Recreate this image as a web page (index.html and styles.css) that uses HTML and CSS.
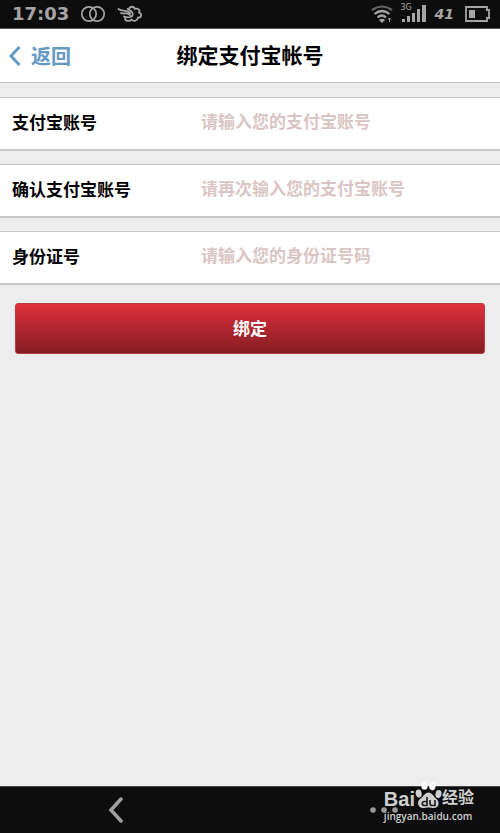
FILE: index.html
```html
<!DOCTYPE html>
<html lang="zh-CN">
<head>
<meta charset="utf-8">
<meta name="viewport" content="width=device-width, initial-scale=1">
<title>绑定支付宝帐号</title>
<link rel="stylesheet" href="styles.css">
</head>
<body>
<div class="status">
  <div class="status-group status-left">
    <span class="clock">17:03</span>
    <svg width="26" height="18" viewBox="0 0 26 18" fill="none" stroke="#a5a5a5" stroke-width="1.7"><circle cx="9" cy="9" r="7.2"/><circle cx="17" cy="9" r="7.2"/></svg>
    <svg width="26" height="18" viewBox="0 0 26 18" fill="none" stroke="#a5a5a5" stroke-width="1.8" stroke-linecap="round" stroke-linejoin="round"><path d="M12 4C13 1 17 1 18 4C21 3 23.500 5 22 7.500C25.500 9 24.500 13 21 12.500C20.500 16 16.500 17 14.500 14.500C12 17 8 16 8 13"/><path d="M1.500 4C5 7 9 4 13 8M4 8C7 9.500 10 7 13 10M7 11.500C11 13 17 12.500 15.500 8C14.500 5.500 12.500 5 10.500 4"/></svg>
  </div>
  <div class="status-group status-right">
    <svg width="22" height="20" viewBox="0 0 22 20" fill="none" stroke="#a5a5a5" stroke-width="2.200"><path d="M1 6Q11-1 21 6" stroke="#666"/><path d="M3.500 10Q11 4 18.500 10M6.500 13.500Q11 9.500 15 13.500"/><path d="M8 16Q11 13.500 14 16L11 19Z" fill="#a5a5a5" stroke="none"/><path d="M18.500 18V14M17 15.500L18.500 14L20 15.500" stroke-width="1"/></svg>
    <div class="signal">
      <span class="network">3G</span>
      <svg width="26" height="18" viewBox="0 0 26 18" fill="#a5a5a5"><path d="M1 14h3v3H1zM6 11h3v6H6zM11 8h3v9h-3zM16 4h3v13h-3zM21 0h4v17h-4z"/></svg>
    </div>
    <span class="percent">41</span>
    <svg width="26" height="16" viewBox="0 0 26 16"><path d="M1 1H22V4H24V12H22V15H1Z" fill="none" stroke="#a5a5a5" stroke-width="1.800"/><path d="M4 4h6v8H4z" fill="#a5a5a5"/></svg>
  </div>
</div>
<header class="header">
  <a class="back" href="#"><svg width="12" height="20" viewBox="0 0 12 20" fill="none" stroke="#6699c4" stroke-width="3"><path d="M10.500 1L2 10L10.500 19"/></svg>返回</a>
  <h1 class="title">绑定支付宝帐号</h1>
</header>
<main class="content">
  <form class="form">
    <div class="row"><label class="label" for="account">支付宝账号</label><input class="field" id="account" type="text" placeholder="请输入您的支付宝账号"></div>
    <div class="row"><label class="label" for="confirm">确认支付宝账号</label><input class="field" id="confirm" type="text" placeholder="请再次输入您的支付宝账号"></div>
    <div class="row"><label class="label" for="identity">身份证号</label><input class="field" id="identity" type="text" placeholder="请输入您的身份证号码"></div>
    <button class="submit" type="button">绑定</button>
  </form>
</main>
<footer class="nav">
  <button class="nav-button" type="button" aria-label="后退"><svg width="16" height="26" viewBox="0 0 16 26" fill="none" stroke="#a0a0a0" stroke-width="3.500" stroke-linecap="round"><path d="M13 2L3 13L13 24"/></svg></button>
  <button class="nav-button" type="button" aria-label="更多"><svg width="28" height="6" viewBox="0 0 28 6" fill="#999"><circle cx="3" cy="3" r="2.800"/><circle cx="14" cy="3" r="2.800"/><circle cx="25" cy="3" r="2.800"/></svg></button>
  <div class="watermark">
    <div class="brand">
      <span class="brand-name">Bai</span>
      <svg width="27" height="28" viewBox="0 0 27 28" fill="#d0d0d0"><ellipse cx="3.700" cy="12.500" rx="3" ry="4" transform="rotate(-12 3.700 12.500)"/><ellipse cx="9.500" cy="4.500" rx="3.200" ry="4.300" fill="#fafafa"/><ellipse cx="17.500" cy="5" rx="3.200" ry="4.300" fill="#fafafa" transform="rotate(12 17.500 5)"/><ellipse cx="23.500" cy="13" rx="3" ry="4" transform="rotate(12 23.500 13)"/><path d="M13.500 11.500C17 11.500 18.500 15.500 21.500 18C25 21 24 27 19 27C16.500 27 15.500 26.500 13.500 26.500C11.500 26.500 10 27 8 27C3 27 1.500 21 5 18C8.500 15.500 10 11.500 13.500 11.500Z"/><g fill="none" stroke="#222" stroke-width="1.700"><path d="M12 16V25M12 20.500H9.500C6.500 20.500 6.500 24.500 9.500 24.500H12M15 19V22.500Q15 24.500 17 24.500H20V19"/></g></svg>
      <span class="brand-cn">经验</span>
    </div>
    <div class="site">jingyan.baidu.com</div>
  </div>
</footer>
</body>
</html>
```
FILE: styles.css
```css
* {
  box-sizing: border-box;
}

body {
  display: flex;
  flex-direction: column;
  min-height: 100vh;
  margin: 0;
  background: #ededed;
  color: #000;
  font-family: "Liberation Sans", "Noto Sans CJK SC", sans-serif;
}

svg {
  display: block;
  flex: none;
}

.status {
  display: flex;
  align-items: center;
  justify-content: space-between;
  height: 29px;
  padding: 0 9px 0 12px;
  border-bottom: 1px solid #555;
  background: #0d0d0d;
  color: #a5a5a5;
  font-family: "DejaVu Sans", sans-serif;
}

.status-group {
  display: flex;
  align-items: center;
}

.status-left {
  gap: 11px;
}

.status-right {
  gap: 8px;
}

.clock {
  font-size: 18px;
  font-weight: bold;
  line-height: 28px;
}

.signal {
  position: relative;
}

.network {
  position: absolute;
  top: -2px;
  left: 0;
  font-size: 8px;
  line-height: 10px;
}

.percent {
  margin-right: 3px;
  font-size: 14px;
  font-style: italic;
  font-weight: bold;
}

.header {
  display: grid;
  grid-template-columns: 1fr auto 1fr;
  align-items: center;
  height: 54px;
  padding: 0 9px;
  border-bottom: 1px solid #c4c4c4;
  background: #fff;
}

.back {
  display: flex;
  align-items: center;
  gap: 10px;
  color: #6699c4;
  font-size: 20px;
  font-weight: bold;
  text-decoration: none;
}

.title {
  margin: 0;
  font-size: 21px;
  line-height: 30px;
}

.content {
  flex: 1;
}

.form {
  display: flex;
  flex-direction: column;
  gap: 13px;
  padding-top: 14px;
}

.row {
  display: grid;
  grid-template-columns: 2fr 3fr;
  height: 54px;
  border-top: 1px solid #c8c8c8;
  border-bottom: 2px solid #c8c8c8;
  background: #fff;
}

.label {
  padding-left: 12px;
  font-size: 17px;
  font-weight: bold;
  line-height: 52px;
}

.field {
  min-width: 0;
  padding: 0 0 3px 1px;
  border: 0;
  background: transparent;
  font: bold 17px "Liberation Sans", "Noto Sans CJK SC", sans-serif;
}

.field::placeholder {
  color: #dbc5c4;
  opacity: 1;
}

.submit {
  height: 51px;
  margin: 5px 15px 0;
  padding: 0 0 2px;
  border: 1px solid #b83a42;
  border-radius: 3px;
  background: linear-gradient(#de303a, #841d23);
  color: #fff;
  font: bold 17px "Liberation Sans", "Noto Sans CJK SC", sans-serif;
}

.nav {
  position: relative;
  display: flex;
  justify-content: space-between;
  align-items: center;
  height: 47px;
  padding: 0 102px 0 108px;
  border-top: 1px solid #444;
  background: #0d0d0d;
}

.nav-button {
  padding: 0;
  border: 0;
  background: none;
}

.watermark {
  position: absolute;
  right: 26px;
  bottom: 9px;
  color: #d0d0d0;
}

.brand {
  display: flex;
  align-items: flex-end;
  height: 30px;
}

.brand-name {
  font-size: 20px;
  font-weight: bold;
  line-height: 20px;
}

.brand-cn {
  font-size: 16px;
  font-weight: bold;
  line-height: 22px;
}

.site {
  font-family: "Open Sans", sans-serif;
  font-size: 10px;
  font-weight: 600;
  line-height: 15px;
}
```
